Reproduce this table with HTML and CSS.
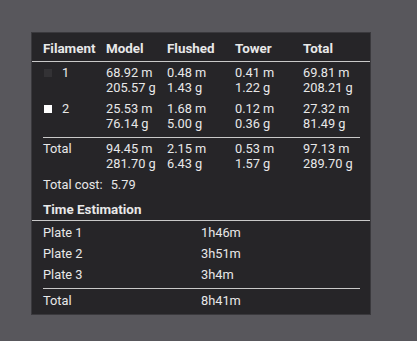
FILE: index.html
```html
<!DOCTYPE html>
<html>
<head>
<meta charset="utf-8">
<link rel="stylesheet" href="styles.css">
</head>
<body>
<div class="panel">
  <div class="grid head">
    <div>Filament</div><div>Model</div><div>Flushed</div><div>Tower</div><div>Total</div>
  </div>
  <div class="hr full"></div>
  <div class="grid row first">
    <div class="fil"><span class="sw dark"></span>1</div>
    <div>68.92 m<br>205.57 g</div>
    <div>0.48 m<br>1.43 g</div>
    <div>0.41 m<br>1.22 g</div>
    <div>69.81 m<br>208.21 g</div>
  </div>
  <div class="grid row">
    <div class="fil"><span class="sw light"></span>2</div>
    <div>25.53 m<br>76.14 g</div>
    <div>1.68 m<br>5.00 g</div>
    <div>0.12 m<br>0.36 g</div>
    <div>27.32 m<br>81.49 g</div>
  </div>
  <div class="hr inset sep1"></div>
  <div class="grid row tot">
    <div>Total</div>
    <div>94.45 m<br>281.70 g</div>
    <div>2.15 m<br>6.43 g</div>
    <div>0.53 m<br>1.57 g</div>
    <div>97.13 m<br>289.70 g</div>
  </div>
  <div class="cost">Total cost:<span class="val">5.79</span></div>
  <div class="title">Time Estimation</div>
  <div class="hr full"></div>
  <div class="times">
    <div class="trow"><div>Plate 1</div><div>1h46m</div></div>
    <div class="trow"><div>Plate 2</div><div>3h51m</div></div>
    <div class="trow"><div>Plate 3</div><div>3h4m</div></div>
  </div>
  <div class="hr inset sep2"></div>
  <div class="trow last"><div>Total</div><div>8h41m</div></div>
</div>
</body>
</html>
```

FILE: styles.css
```css
html, body {
  margin: 0;
  padding: 0;
  background: #58575c;
  width: 417px;
  height: 341px;
  overflow: hidden;
}
body {
  font-family: Roboto, "Liberation Sans", sans-serif;
  font-size: 12.8px;
  color: #e8e8e8;
  padding-top: 33px;
  padding-left: 32px;
  box-sizing: border-box;
}
.panel {
  width: 338px;
  height: 281px;
  background: #262528;
  box-sizing: border-box;
  padding-top: 8px;
  box-shadow: 0 0 0 1px #3a393d;
}
.grid {
  display: grid;
  grid-template-columns: 63px 61px 68px 68px auto;
  padding-left: 11px;
  line-height: 15px;
}
.head {
  font-weight: bold;
  font-size: 13.4px;
  height: 20px;
  line-height: 16px;
}
.hr {
  height: 1px;
  background: #c9c9c9;
}
.full { width: 100%; }
.inset { margin-left: 11px; margin-right: 10px; }
.row.first { margin-top: 3px; }
.row { margin-bottom: 6px; }
.sep1 { margin-top: 1px; }
.tot { margin-top: 3px; margin-bottom: 0; }
.fil {
  display: flex;
  align-items: flex-start;
}
.sw {
  width: 8px;
  height: 8px;
  margin-top: 4px;
  margin-left: 1px;
  margin-right: 10px;
}
.sw.dark { background: #333235; }
.sw.light { background: #ffffff; }
.cost {
  padding-left: 11px;
  margin-top: 6px;
  line-height: 15px;
}
.cost .val { margin-left: 8px; }
.title {
  padding-left: 11px;
  font-weight: bold;
  font-size: 13.4px;
  margin-top: 10px;
  line-height: 15px;
  margin-bottom: 3px;
}
.times { padding-top: 4px; }
.trow {
  display: grid;
  grid-template-columns: 158px auto;
  padding-left: 11px;
  line-height: 15px;
  margin-bottom: 6px;
}
.sep2 { margin-top: 0px; }
.trow.last { margin-top: 4px; }
```
